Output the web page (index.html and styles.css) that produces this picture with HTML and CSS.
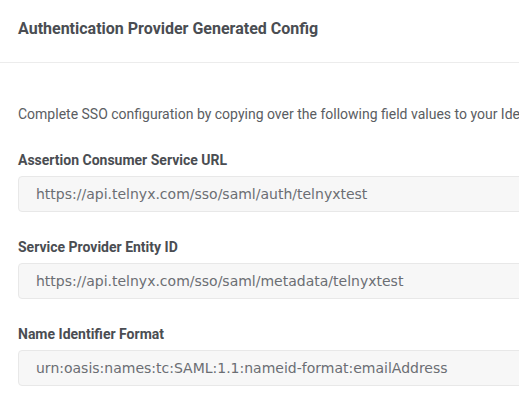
FILE: index.html
```html
<!DOCTYPE html>
<html>
<head>
<meta charset="utf-8">
<link rel="stylesheet" href="styles.css">
</head>
<body>
<div class="card">
  <div class="card-header">
    <h2 class="title">Authentication Provider Generated Config</h2>
  </div>
  <div class="card-body">
    <p class="intro">Complete SSO configuration by copying over the following field values to your Identity Provider.</p>
    <div class="field">
      <label class="label">Assertion Consumer Service URL</label>
      <div class="input">https://api.telnyx.com/sso/saml/auth/telnyxtest</div>
    </div>
    <div class="field">
      <label class="label">Service Provider Entity ID</label>
      <div class="input">https://api.telnyx.com/sso/saml/metadata/telnyxtest</div>
    </div>
    <div class="field">
      <label class="label">Name Identifier Format</label>
      <div class="input">urn:oasis:names:tc:SAML:1.1:nameid-format:emailAddress</div>
    </div>
  </div>
</div>
</body>
</html>
```
FILE: styles.css
```css
html, body {
  margin: 0;
  padding: 0;
  background: #ffffff;
}
body {
  font-family: Roboto, "Liberation Sans", sans-serif;
  color: #555a60;
  width: 519px;
  overflow: hidden;
}
.card {
  width: 560px;
}
.card-header {
  height: 63px;
  box-sizing: border-box;
  padding: 19px 18px 0;
  border-bottom: 1px solid #ececec;
}
.title {
  margin: 0;
  font-size: 16px;
  font-weight: 700;
  color: #4a4d52;
  line-height: 19px;
}
.card-body {
  padding: 41px 18px 0;
}
.intro {
  margin: 0 0 26px;
  font-size: 14px;
  line-height: 20px;
  color: #5a5d62;
  white-space: nowrap;
}
.field {
  margin-bottom: 25px;
}
.label {
  display: block;
  font-size: 14px;
  font-weight: 700;
  line-height: 20px;
  color: #4a4d52;
  margin-bottom: 6px;
}
.input {
  height: 36px;
  box-sizing: border-box;
  border: 1px solid #e8e8e8;
  border-radius: 4px;
  background: #f7f7f7;
  padding: 0 17px;
  display: flex;
  align-items: center;
  font-family: "DejaVu Sans", sans-serif;
  font-size: 14px;
  color: #6b6e73;
  white-space: nowrap;
}
```
